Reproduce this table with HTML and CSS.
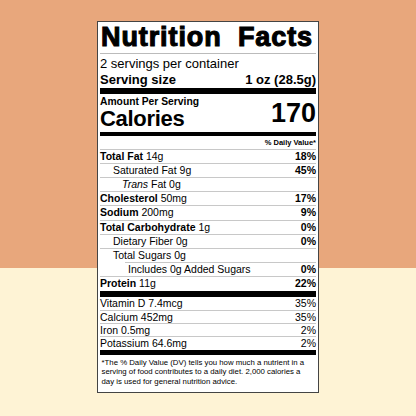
FILE: index.html
```html
<!DOCTYPE html>
<html lang="en">
<head>
    <meta charset="UTF-8">
    <meta name="viewport" content="width=device-width, initial-scale=1.0">
    <title>Nutrition Facts</title>
    <link rel="stylesheet" href="styles.css">
</head>
<body>
    <div class="label">
        <!-- Header -->
        <div class="title">Nutrition Facts</div>
        <div class="servings">2 servings per container</div>
        <div class="serving-size">
            <span>Serving size</span>
            <span>1 oz (28.5g)</span>
        </div>

        <!-- Calories -->
        <div class="calories">
            <div class="calories-left">
                <div class="amount">Amount Per Serving</div>
                <div class="calories-label">Calories</div>
            </div>
            <div class="calories-value">170</div>
        </div>

        <div class="dv-header">% Daily Value*</div>

        <!-- Nutrients -->
        <div class="row"><span><b>Total Fat</b> 14g</span><b>18%</b></div>
        <div class="row sub"><span>Saturated Fat 9g</span><b>45%</b></div>
        <div class="row sub-trans"><span><i>Trans</i> Fat 0g</span></div>
        <div class="row"><span><b>Cholesterol</b> 50mg</span><b>17%</b></div>
        <div class="row"><span><b>Sodium</b> 200mg</span><b>9%</b></div>
        <div class="row"><span><b>Total Carbohydrate</b> 1g</span><b>0%</b></div>
        <div class="row sub"><span>Dietary Fiber 0g</span><b>0%</b></div>
        <div class="row sub"><span>Total Sugars 0g</span></div>
        <div class="row sub-added"><span>Includes 0g Added Sugars</span><b>0%</b></div>
        <div class="row protein"><span><b>Protein</b> 11g</span><b>22%</b></div>

        <!-- Vitamins and minerals -->
        <div class="vrow first"><span>Vitamin D 7.4mcg</span><span>35%</span></div>
        <div class="vrow"><span>Calcium 452mg</span><span>35%</span></div>
        <div class="vrow"><span>Iron 0.5mg</span><span>2%</span></div>
        <div class="vrow last"><span>Potassium 64.6mg</span><span>2%</span></div>

        <div class="footnote">*The % Daily Value (DV) tells you how much a nutrient in a<br>serving of food contributes to a daily diet. 2,000 calories a<br>day is used for general nutrition advice.</div>
    </div>
</body>
</html>
```

FILE: styles.css
```css
body {
    margin: 0;
    padding-top: 21px;
    height: 416px;
    box-sizing: border-box;
    font-family: "Liberation Sans", Arial, sans-serif;
    color: #000;
    background: linear-gradient(to bottom, #e8a77c 268px, #fef3d5 268px);
}

.label {
    width: 222px;
    box-sizing: border-box;
    margin: 0 auto;
    background-color: #ffffff;
    border: 1.5px solid #444;
    padding: 0 2px;
}

.title {
    font-size: 27px;
    font-weight: bold;
    line-height: 31px;
    height: 31px;
    padding-left: 1px;
    letter-spacing: 0.9px;
    word-spacing: 8px;
    -webkit-text-stroke: 1.1px #000;
    white-space: nowrap;
    border-bottom: 1px solid #bbb;
}

.servings {
    font-size: 13px;
    line-height: 15px;
    padding-top: 1.5px;
}

.serving-size {
    display: flex;
    justify-content: space-between;
    font-size: 13px;
    font-weight: bold;
    line-height: 17px;
    border-bottom: 6px solid #000;
}

.calories {
    display: flex;
    justify-content: space-between;
    align-items: flex-end;
    padding-bottom: 1px;
    border-bottom: 4px solid #000;
}

.amount {
    font-size: 10.3px;
    font-weight: bold;
    line-height: 11px;
    padding-top: 2px;
}

.calories-label {
    font-size: 22px;
    font-weight: bold;
    line-height: 24px;
    letter-spacing: -0.3px;
}

.calories-value {
    font-size: 27px;
    font-weight: bold;
    line-height: 27px;
    margin-bottom: 4px;
}

.dv-header {
    font-size: 7.5px;
    font-weight: bold;
    line-height: 10.5px;
    padding-top: 2.5px;
    text-align: right;
}

.row {
    display: flex;
    justify-content: space-between;
    font-size: 10.5px;
    line-height: 13.2px;
    border-top: 1px solid #c8c8c8;
}

.sub {
    padding-left: 13px;
}

.sub-trans {
    padding-left: 22px;
}

.sub-added {
    margin-left: 25px;
    padding-left: 3px;
}

.protein {
    border-bottom: 6px solid #000;
}

.vrow {
    display: flex;
    justify-content: space-between;
    font-size: 10.5px;
    line-height: 12.25px;
    border-top: 1px solid #c8c8c8;
}

.vrow.first {
    border-top: none;
    line-height: 13.25px;
}

.vrow.last {
    border-bottom: 5px solid #000;
}

.footnote {
    font-size: 7.8px;
    line-height: 9.7px;
    padding: 3px 0 5px 1.5px;
    white-space: nowrap;
}
```
